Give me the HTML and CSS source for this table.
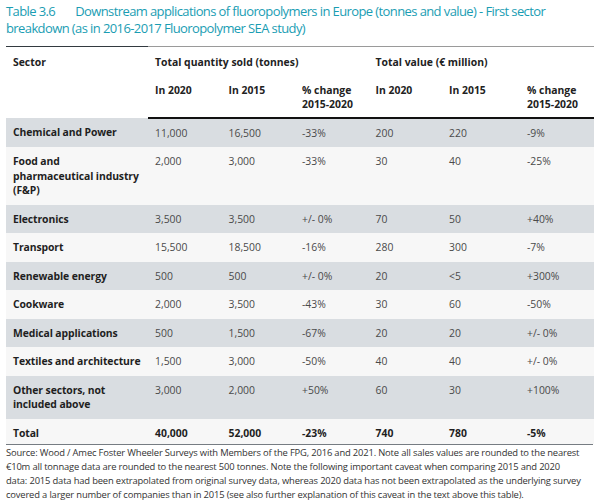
FILE: index.html
```html
<!DOCTYPE html>
<html>
<head>
<meta charset="utf-8">
<link rel="stylesheet" href="styles.css">
</head>
<body>
<div class="page">
  <h1 class="title"><span class="num">Table 3.6</span>Downstream applications of fluoropolymers in Europe (tonnes and value) - First sector breakdown (as in 2016-2017 Fluoropolymer SEA study)</h1>
  <table class="data">
    <colgroup>
      <col class="c-sector"><col class="c-n"><col class="c-n"><col class="c-n"><col class="c-n"><col class="c-w"><col class="c-n">
    </colgroup>
    <thead>
      <tr class="group">
        <th rowspan="2" class="first">Sector</th>
        <th colspan="3">Total quantity sold (tonnes)</th>
        <th colspan="3">Total value (€ million)</th>
      </tr>
      <tr class="sub">
        <th>In 2020</th><th>In 2015</th><th>% change 2015-2020</th>
        <th>In 2020</th><th>In 2015</th><th>% change 2015-2020</th>
      </tr>
    </thead>
    <tbody>
      <tr class="dark"><th>Chemical and Power</th><td>11,000</td><td>16,500</td><td>-33%</td><td>200</td><td>220</td><td>-9%</td></tr>
      <tr class="light"><th>Food and<br>pharmaceutical industry<br>(F&amp;P)</th><td>2,000</td><td>3,000</td><td>-33%</td><td>30</td><td>40</td><td>-25%</td></tr>
      <tr class="dark"><th>Electronics</th><td>3,500</td><td>3,500</td><td>+/- 0%</td><td>70</td><td>50</td><td>+40%</td></tr>
      <tr class="light"><th>Transport</th><td>15,500</td><td>18,500</td><td>-16%</td><td>280</td><td>300</td><td>-7%</td></tr>
      <tr class="dark"><th>Renewable energy</th><td>500</td><td>500</td><td>+/- 0%</td><td>20</td><td>&lt;5</td><td>+300%</td></tr>
      <tr class="light"><th>Cookware</th><td>2,000</td><td>3,500</td><td>-43%</td><td>30</td><td>60</td><td>-50%</td></tr>
      <tr class="dark"><th>Medical applications</th><td>500</td><td>1,500</td><td>-67%</td><td>20</td><td>20</td><td>+/- 0%</td></tr>
      <tr class="light"><th>Textiles and architecture</th><td>1,500</td><td>3,000</td><td>-50%</td><td>40</td><td>40</td><td>+/- 0%</td></tr>
      <tr class="dark"><th>Other sectors, not<br>included above</th><td>3,000</td><td>2,000</td><td>+50%</td><td>60</td><td>30</td><td>+100%</td></tr>
      <tr class="light total"><th>Total</th><td>40,000</td><td>52,000</td><td>-23%</td><td>740</td><td>780</td><td>-5%</td></tr>
    </tbody>
  </table>
  <p class="note">Source: Wood / Amec Foster Wheeler Surveys with Members of the FPG, 2016 and 2021. Note all sales values are rounded to the nearest<br>€10m all tonnage data are rounded to the nearest 500 tonnes. Note the following important caveat when comparing 2015 and 2020<br>data: 2015 data had been extrapolated from original survey data, whereas 2020 data has not been extrapolated as the underlying survey<br>covered a larger number of companies than in 2015 (see also further explanation of this caveat in the text above this table).</p>
</div>
</body>
</html>
```

FILE: styles.css
```css
html, body {
  margin: 0;
  padding: 0;
  background: #ffffff;
}
.page {
  width: 587px;
  padding: 3px 7px 0 6px;
  font-family: "Open Sans", "Noto Sans", sans-serif;
}
.title {
  margin: 0 0 9px 0;
  font-weight: 400;
  font-size: 13px;
  line-height: 17px;
  letter-spacing: -0.6px;
  color: #1a9db3;
}
.title .num {
  display: inline-block;
  margin-right: 20px;
}
.data {
  width: 587px;
  table-layout: fixed;
  border-collapse: collapse;
  font-size: 10.4px;
  line-height: 14.5px;
}
.c-sector { width: 142px; }
.c-n { width: 73.5px; }
.c-w { width: 78px; }
.data th, .data td {
  text-align: left;
  vertical-align: top;
  padding: 7px 2px 7px 7px;
}
.data thead th {
  font-weight: 700;
  color: #222;
  background: #fff;
}
.data thead .group th {
  border-top: 1px solid #9a9a9a;
  padding-top: 8px;
  padding-bottom: 6px;
}
.data thead .group th.first {
  border-top: 1px solid #333a40;
}
.data thead .sub th {
  padding-bottom: 5px;
  border-bottom: 2px solid #111;
}
.data tbody th {
  font-weight: 700;
  color: #1f1f1f;
  letter-spacing: -0.1px;
}
.data tbody td {
  color: #4a4a4a;
}
.data tr.dark { background: #d9dde1; }
.data tr.light { background: #f7f7f7; }
.data tr.total td { font-weight: 700; color: #1f1f1f; }
.data tr.total th, .data tr.total td { padding-bottom: 4px; }
.note {
  margin: 0;
  border-top: 1px solid #767c82;
  padding-top: 1px;
  font-size: 9.4px;
  line-height: 14px;
  letter-spacing: -0.16px;
  white-space: nowrap;
  color: #333;
}
```
